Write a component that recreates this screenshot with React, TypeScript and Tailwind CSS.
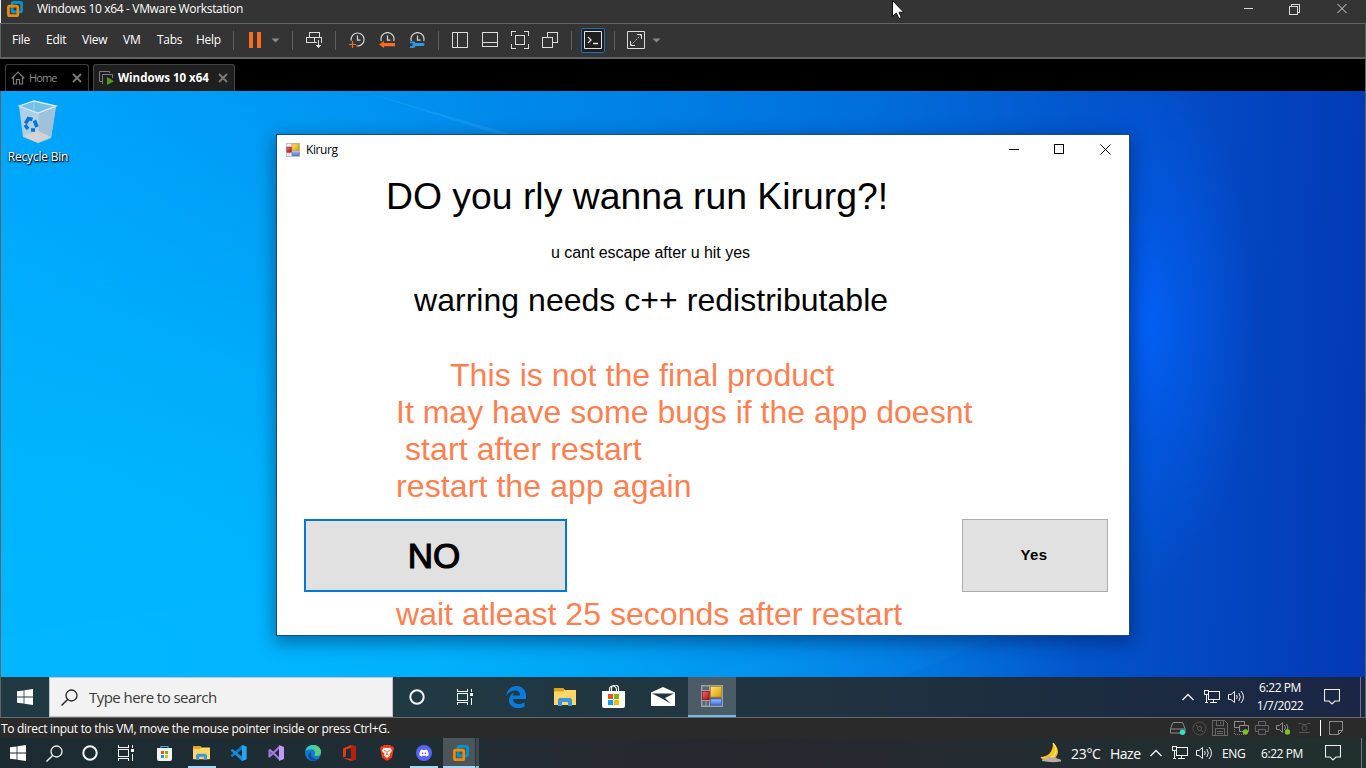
import React, { ReactNode } from 'react';
import { FaDiscord } from 'react-icons/fa';

type SvgProps = { w: number; h: number; children: ReactNode; crisp?: boolean; className?: string };

function Svg({ w, h, children, crisp, className = '' }: SvgProps) {
  return (
    <svg
      width={w}
      height={h}
      viewBox={`0 0 ${w} ${h}`}
      fill="none"
      shapeRendering={crisp ? 'crispEdges' : 'auto'}
      className={`block shrink-0 ${className}`}
    >
      {children}
    </svg>
  );
}

function VmwareLogo() {
  return (
    <Svg w={16} h={16}>
      <rect x="5.2" y="1.4" width="9.4" height="9.4" rx="1.2" stroke="#0095d3" strokeWidth="2.7" />
      <rect x="1.4" y="5.2" width="9.4" height="9.4" rx="1.2" stroke="#f38b00" strokeWidth="2.7" />
      <path d="M5.2 8.4V10.8H8" stroke="#0095d3" strokeWidth="2.7" />
    </Svg>
  );
}

function Caret() {
  return (
    <Svg w={9} h={5}>
      <path d="M0.5 0.5h8L4.5 4.5z" fill="#8a8a8a" />
    </Svg>
  );
}

function Sep({ className }: { className: string }) {
  return <div className={`h-[19px] w-px shrink-0 bg-[#5e5e5e] ${className}`} />;
}

function SnapClock({ full }: { full?: boolean }) {
  return (
    <>
      <path
        d={full ? 'M2.2 8.6A6.5 6.5 0 1 1 7.6 13.9' : 'M2.3 9A6.5 6.5 0 1 1 14.7 9'}
        stroke="#d6d6d6"
        strokeWidth="1.2"
      />
      <path d="M8.5 3.5V8.2H11.5" stroke="#d6d6d6" strokeWidth="1.2" />
    </>
  );
}

function TitleBar() {
  return (
    <div className="flex h-[23px] shrink-0 items-start border-l border-[#e8e8e8] bg-[#343434]">
      <div className="mt-px ml-[6px]">
        <VmwareLogo />
      </div>
      <span className="mt-0 ml-[14px] w-[1198px] text-[12px] leading-[18px] tracking-[-0.34px] whitespace-pre text-white">
        Windows 10 x64 - VMware Workstation
      </span>
      <div className="mt-[3px] flex items-start text-[#d8d8d8]">
        <Svg w={12} h={12} crisp className="ml-[9px]">
          <path d="M0 5.5h9" stroke="currentColor" />
        </Svg>
        <Svg w={12} h={12} crisp className="ml-[33px]">
          <path d="M0.5 3.5h8v8h-8zM2.5 3V1.5h8v8H9" stroke="currentColor" />
        </Svg>
        <Svg w={12} h={12} className="ml-[36px]">
          <path d="M0.5 1l9 9M9.500 1l-9 9" stroke="currentColor" />
        </Svg>
      </div>
    </div>
  );
}

function Toolbar() {
  return (
    <div className="flex h-[36px] shrink-0 items-center border-x border-t border-b-2 border-[#626262] bg-[#343434] pl-[11px] text-[12px] text-white [&>span]:mb-[2px] [&>span]:shrink-0 [&>span]:leading-[17px] [&>span]:tracking-[-0.25px]">
      <span className="w-[34px]">File</span>
      <span className="w-[36px]">Edit</span>
      <span className="w-[41px]">View</span>
      <span className="w-[34px]">VM</span>
      <span className="w-[39px]">Tabs</span>
      <span className="w-[37px]">Help</span>
      <Sep className="mr-[15px]" />
      <Svg w={12} h={16} crisp className="mb-px">
        <path d="M0 0h4v16H0zM8 0h4v16H8z" fill="#ff6a1f" />
      </Svg>
      <div className="mr-[11px] ml-[11px] -translate-x-px">
        <Caret />
      </div>
      <Sep className="mr-[13px]" />
      <Svg w={17} h={17} crisp>
        <path d="M3.500 0.500h10v5h-10zM0.500 5.500h15v5h-15zM8.500 5.500v5" stroke="#dcdcdc" />
        <path d="M9 9h8v8H9z" fill="#343434" />
        <path d="M12.500 8v8M10 13.500h5M11 14.500h3" stroke="#dcdcdc" />
        <path d="M9 10.500h2M15.500 6v5" stroke="#dcdcdc" />
      </Svg>
      <Sep className="mr-[13px] ml-[12px]" />
      <Svg w={17} h={17}>
        <SnapClock full />
        <path d="M3.500 9v7M0 12.500h7" stroke="#ff6a1f" strokeWidth="1.200" />
      </Svg>
      <Svg w={17} h={17} className="ml-[13px]">
        <SnapClock />
        <path d="M0 12.500L5 9v2h11v3.200H5V16z" fill="#ff6a1f" />
      </Svg>
      <Svg w={17} h={17} className="ml-[13px]">
        <SnapClock />
        <path
          d="M1 9.500h3c1.500 0 2 .7 2.500 1.500H14c2 0 2.300 3 0 3H6.500C6 15 5.500 16 4 16H1v-1.700h2.500v-3H1z"
          fill="#2f9be6"
        />
      </Svg>
      <Sep className="mr-[13px] ml-[12px]" />
      <Svg w={16} h={16} crisp className="mb-px">
        <path d="M0.500 0.500h15v15h-15zM5.500 0v16" stroke="#dcdcdc" />
      </Svg>
      <Svg w={16} h={16} crisp className="mb-px ml-[14px]">
        <path d="M0.500 0.500h15v14h-15zM0 10.500h16" stroke="#dcdcdc" />
      </Svg>
      <Svg w={18} h={18} crisp className="mb-px ml-[13px]">
        <path
          d="M0.500 5V0.500H5M13 0.500h4.500V5M17.500 13v4.500H13M5 17.500H0.500V13M4.500 4.500h9v9h-9z"
          stroke="#dcdcdc"
        />
      </Svg>
      <Svg w={17} h={16} crisp className="mb-px ml-[13px]">
        <path d="M0.500 5.500h10v10h-10zM5.500 5V0.500h10v10H11" stroke="#dcdcdc" />
      </Svg>
      <Sep className="mr-[9px] ml-[12px]" />
      <div className="mb-px flex h-[25px] w-[24px] shrink-0 items-center justify-center rounded-[2px] border border-[#2271b3] bg-[#1f1f1f]">
        <Svg w={18} h={18}>
          <path d="M0.500 0.500h17v17h-17z" stroke="#e4e4e4" />
          <path d="M4 6l3 3-3 3M9 12.500h5" stroke="#e4e4e4" strokeWidth="1.300" />
        </Svg>
      </div>
      <Sep className="mr-[12px] ml-[9px]" />
      <Svg w={18} h={18} className="mb-px">
        <path d="M0.500 0.500h17v17h-17z" stroke="#dcdcdc" />
        <path d="M10 3.500h4.500V8M8 14.500H3.500V10" stroke="#dcdcdc" />
        <path d="M4 14L14 4" stroke="#b8b8b8" strokeDasharray="2 1.200" />
      </Svg>
      <div className="ml-[7px]">
        <Caret />
      </div>
    </div>
  );
}

function TabX() {
  return (
    <Svg w={10} h={10}>
      <path d="M1 1l8 8M9 1l-8 8" stroke="#7c7c7c" strokeWidth="1.800" />
    </Svg>
  );
}

function TabStrip() {
  return (
    <div className="flex h-[32px] shrink-0 items-end border-r border-[#626262] bg-black">
      <div className="ml-[5px] flex h-[27px] w-[84px] items-center rounded-t-[3px] border border-b-0 border-[#3c3c3c] bg-black">
        <Svg w={14} h={14} className="ml-[5px]">
          <path d="M0.700 7.500L7 1l6.300 6.500M2.500 6v7h3V8.500h3V13h3V6" stroke="#7d7d7d" strokeWidth="1.200" />
        </Svg>
        <span className="ml-[4px] w-[43px] text-[11px] leading-[16px] tracking-[-0.85px] text-[#8c8c8c]">Home</span>
        <TabX />
      </div>
      <div className="ml-[4px] flex h-[27px] w-[142px] items-center rounded-t-[3px] border border-b-0 border-[#454545] bg-[#1f1f1f]">
        <Svg w={15} h={14} className="ml-[5px]">
          <path d="M10.500 2V0.500h-10v10H3M3.500 13V3.500h10V7" stroke="#7d7d7d" />
          <path d="M8 6l7 4.200L8 14z" fill="#4f9c1b" />
        </Svg>
        <span className="ml-[4px] w-[100px] text-[11.5px] leading-[16px] font-bold tracking-[-0.02px] whitespace-pre text-white">
          Windows 10 x64
        </span>
        <TabX />
      </div>
    </div>
  );
}

function RecycleBin() {
  return (
    <div className="flex w-[74px] flex-col items-center">
      <Svg w={40} h={44}>
        <path d="M1 6L20 13 38 6 33 38 20 43 5 37z" fill="#b9d3e4" opacity=".93" />
        <path d="M20 13L38 6 33 38 20 43z" fill="#9fc2da" />
        <path d="M1 6L16 1 38 6 20 13z" fill="#73bfe6" />
        <path d="M1 6L16 1 38 6 20 13z" stroke="#dcecf6" strokeWidth="1.300" />
        <path d="M5 36l15-5 13 6-13 6z" fill="#d9d3d2" opacity=".9" />
        <path d="M16 1v12M20 13v27" stroke="#cfe4f1" strokeWidth=".6" />
        <g stroke="#0a72d0" strokeWidth="3.600">
          <path d="M7.500 23.500l3-5 4 1" />
          <path d="M16.500 20.500l2.500 6.500" />
          <path d="M17 30h-4M10 29l-3-4" />
        </g>
      </Svg>
      <span className="mt-[4px] text-[12px] leading-[17px] tracking-[-0.22px] whitespace-pre text-white [text-shadow:0_1px_2px_#000,1px_1px_1px_#000]">
        Recycle Bin
      </span>
    </div>
  );
}

function FormsIcon({ size, dark }: { size: number; dark?: boolean }) {
  return (
    <svg width={size} height={size} viewBox="0 0 22 22" className="block shrink-0">
      <defs>
        <linearGradient id="fy" x1="0" y1="0" x2="1" y2="1">
          <stop offset="0" stopColor="#ffe680" />
          <stop offset="1" stopColor="#d99a00" />
        </linearGradient>
        <linearGradient id="fb" x1="0" y1="0" x2="0" y2="1">
          <stop offset="0" stopColor="#9cc0ff" />
          <stop offset="1" stopColor="#3a6fe0" />
        </linearGradient>
        <linearGradient id="fr" x1="0" y1="0" x2="1" y2="1">
          <stop offset="0" stopColor="#f07070" />
          <stop offset="1" stopColor="#a01010" />
        </linearGradient>
      </defs>
      <rect x=".7" y=".7" width="20.600" height="20.600" fill={dark ? '#5a6670' : '#f4f4f4'} stroke={dark ? '#9aa3aa' : '#b9b9b9'} strokeWidth="1.400" />
      <path d="M8.500 1v20M1 5.500h8M1 15.500h8M5 15v6" stroke={dark ? '#9aa3aa' : '#c8c8c8'} />
      <rect x="9.500" y="1.500" width="11" height="10.500" fill="url(#fy)" stroke="#c08a10" strokeWidth=".8" />
      <rect x="1.300" y="6.500" width="7" height="8" fill="url(#fr)" stroke="#a01818" strokeWidth=".8" />
      <rect x="9.500" y="14" width="11" height="6" fill="url(#fb)" stroke="#3c68c8" strokeWidth=".8" />
    </svg>
  );
}

function Dialog() {
  return (
    <div className="absolute top-[43px] left-[275px] flex h-[502px] w-[854px] flex-col border border-[#1d4d72] bg-white font-['Liberation_Sans',Arial,sans-serif] text-black shadow-[0_5px_16px_2px_rgba(0,20,60,0.42)]">
      <div className="flex h-[30px] shrink-0 items-center font-['Open_Sans','Noto_Sans',sans-serif]">
        <div className="mb-px ml-[9px]">
          <FormsIcon size={14} />
        </div>
        <span className="mb-px ml-[6px] flex-1 text-[12px] leading-[17px] tracking-[-0.4px]">Kirurg</span>
        <Svg w={11} h={11} crisp className="mr-[34px]">
          <path d="M0 4.500h10" stroke="#000" />
        </Svg>
        <Svg w={11} h={11} crisp className="mr-[35px] mb-px">
          <path d="M0.500 0.500h9v9h-9z" stroke="#000" />
        </Svg>
        <Svg w={11} h={11} className="mr-[18px] mb-[2px]">
          <path d="M0.500 0.500l10 10M10.500 0.500l-10 10" stroke="#000" />
        </Svg>
      </div>
      <h1 className="mt-[10px] ml-[109px] h-[43px] shrink-0 text-[37.33px] leading-[43px] tracking-[0px] whitespace-pre">
        DO you rly wanna run Kirurg?!
      </h1>
      <p className="mt-[26px] ml-[274px] h-[18px] shrink-0 text-[16px] leading-[18px] tracking-[-0.04px] whitespace-pre">
        u cant escape after u hit yes
      </p>
      <p className="mt-[20px] ml-[137px] h-[37px] shrink-0 text-[32px] leading-[37px] tracking-[0.03px] whitespace-pre">
        warring needs c++ redistributable
      </p>
      <div className="mt-[38px] ml-[119px] shrink-0 text-[32px] leading-[37px] whitespace-pre text-[#ff7f50]">
        <p className="pl-[54px] tracking-[0.06px]">This is not the final product</p>
        <p>It may have some bugs if the app doesnt</p>
        <p className="pl-[9px] tracking-[0.1px]">start after restart</p>
        <p className="tracking-[0.1px]">restart the app again</p>
      </div>
      <div className="mt-[14px] flex h-[73px] shrink-0 justify-between pr-[21px] pl-[27px]">
        <button className="w-[263px] border-2 border-[#0078d7] bg-[#e1e1e1] pr-[3px] text-[35px] leading-[40px] [-webkit-text-stroke:1.2px_#000]">
          NO
        </button>
        <button className="w-[146px] border border-[#adadad] bg-[#e1e1e1] pr-[2px] text-[15px] font-bold tracking-[0.4px]">Yes</button>
      </div>
      <p className="mt-[4px] ml-[119px] h-[37px] shrink-0 text-[32px] leading-[37px] tracking-[0.03px] whitespace-pre text-[#ff7f50]">
        wait atleast 25 seconds after restart
      </p>
    </div>
  );
}

function Desktop() {
  return (
    <div className="relative h-[586px] shrink-0 overflow-hidden border-x border-[#5f6468] bg-[radial-gradient(ellipse_110px_260px_at_1146px_232px,rgba(3,96,245,1)_0%,rgba(3,92,235,0.7)_35%,rgba(3,80,215,0)_100%),radial-gradient(ellipse_1000px_620px_at_80px_586px,#00b7ff_0%,rgba(0,183,255,0.85)_35%,rgba(0,150,240,0)_100%),linear-gradient(92deg,#00a3fc_0%,#0095f1_23%,#0082e6_45%,#006edb_63%,#035bd0_75%,#0350c8_82%,#0345c0_90%,#0339b4_100%)]">
      <svg width="1364" height="586" className="absolute inset-0 block">
        <path d="M360 0L520 46H505z" fill="#3fb4ff" opacity=".25" />
        <path d="M0 545L275 500V586H0z" fill="#19c0ff" opacity=".08" />
        <path d="M700 586L860 530 1000 545 900 586z" fill="#20a0ff" opacity=".08" />
      </svg>
      <div className="absolute top-[9px] left-0">
        <RecycleBin />
      </div>
      <Dialog />
    </div>
  );
}

function WinLogo() {
  return (
    <Svg w={16} h={16}>
      <path d="M0 2.300L6.600 1.400V7.600H0zM7.400 1.300L16 0V7.600H7.400zM0 8.400H6.600V14.600L0 13.700zM7.400 8.400H16V16L7.400 14.800z" fill="#fff" />
    </Svg>
  );
}

function Magnifier({ color }: { color: string }) {
  return (
    <Svg w={17} h={17}>
      <circle cx="10.500" cy="6.500" r="5.500" stroke={color} strokeWidth="1.300" />
      <path d="M6.600 10.400L0.500 16.500" stroke={color} strokeWidth="1.400" />
    </Svg>
  );
}

function Ring() {
  return (
    <Svg w={16} h={16}>
      <circle cx="8" cy="8" r="6.700" stroke="#f4f4f4" strokeWidth="2" />
    </Svg>
  );
}

function TaskView() {
  return (
    <Svg w={17} h={16} crisp>
      <path d="M0.500 4.500h10v7h-10zM0.500 0v2.500h10V0M0.500 16v-2.500h10V16M14.500 0v3M14.500 9v7" stroke="#f4f4f4" />
      <path d="M13 4h3v3h-3z" fill="#f4f4f4" />
    </Svg>
  );
}

function Explorer({ size }: { size: number }) {
  return (
    <svg width={size} height={(size * 18) / 22} viewBox="0 0 22 18" className="block">
      <path d="M0 0h9l2 2h11v15H0z" fill="#ffd767" />
      <path d="M0 0h9l1.500 1.500L9 3.500H0z" fill="#e0a11b" />
      <path d="M4 18v-6.500L5.500 10h11l1.500 1.500V18h-4v-4H8v4z" fill="#3c96dc" />
    </svg>
  );
}

function StoreSquares({ x, y, s, g }: { x: number; y: number; s: number; g: number }) {
  return (
    <>
      <rect x={x} y={y} width={s} height={s} fill="#f25022" />
      <rect x={x + s + g} y={y} width={s} height={s} fill="#7fba00" />
      <rect x={x} y={y + s + g} width={s} height={s} fill="#00a4ef" />
      <rect x={x + s + g} y={y + s + g} width={s} height={s} fill="#ffb900" />
    </>
  );
}

function Chevron() {
  return (
    <Svg w={12} h={8}>
      <path d="M0.500 7L6 1.500 11.500 7" stroke="#f0f0f0" strokeWidth="1.300" />
    </Svg>
  );
}

function Network() {
  return (
    <Svg w={16} h={14} crisp>
      <path d="M5 1.500h10.500v8H4.500V5M9.500 10v3M6 12.500h7M0.500 0.500h4v4h-4zM2.500 5v8M1 12.500h3" stroke="#f0f0f0" />
    </Svg>
  );
}

function Speaker() {
  return (
    <Svg w={17} h={14}>
      <path d="M0.500 4.500H3L6.500 1.500V12.500L3 9.500H0.500z" stroke="#f0f0f0" />
      <path d="M8.500 5q1.500 2 0 4M10.800 3q3 4 0 8M13 1q5 6 0 12" stroke="#f0f0f0" />
    </Svg>
  );
}

function Notification() {
  return (
    <Svg w={16} h={16}>
      <path d="M0.500 0.500h15v11.500H11L8 15 5 12H0.500z" stroke="#f0f0f0" strokeWidth="1.100" />
    </Svg>
  );
}

function Cell({ children, className }: { children: ReactNode; className: string }) {
  return <div className={`flex h-full shrink-0 items-center justify-center ${className}`}>{children}</div>;
}

function GuestTaskbar() {
  return (
    <div className="flex h-[40px] shrink-0 items-center border-x border-[#5f6468] bg-[linear-gradient(90deg,#203a44_0%,#203a44_30%,#20333f_60%,#1b2a41_85%,#1b2646_100%)] text-white">
      <Cell className="w-[48px]">
        <WinLogo />
      </Cell>
      <div className="flex h-full w-[344px] shrink-0 items-center border border-[#c4c4c4] bg-[#f2f2f2] pl-[11px]">
        <Magnifier color="#222" />
        <span className="ml-[11px] text-[15px] leading-[20px] tracking-[-0.55px] whitespace-pre text-[#3a3a3a]">
          Type here to search
        </span>
      </div>
      <Cell className="w-[48px]">
        <Ring />
      </Cell>
      <Cell className="w-[48px]">
        <TaskView />
      </Cell>
      <Cell className="ml-[2px] w-[49px]">
        <Svg w={20} h={22}>
          <path
            d="M0 10C1 3.500 5.500 0 10.500 0 16.500 0 20 4.500 20 9.500V13H7c0 3.500 3 5 6 5 2 0 4-.6 5.500-1.500V20.500C17 21.500 14.500 22 12 22 6.500 22 3 18.800 3 14.200 3 10.700 5 8 8 6.600 7.300 7.500 7 8.500 6.900 9.500H14C14 6.500 12.500 4.500 9 4.500 5.500 4.500 2 6.600 0 10z"
            fill="#0a7bdc"
          />
        </Svg>
      </Cell>
      <Cell className="w-[49px]">
        <Explorer size={22} />
      </Cell>
      <Cell className="w-[49px]">
        <Svg w={23} h={23} className="mb-px">
          <path d="M7.500 7V4.500a3.500 3.500 0 0 1 7 0V7M9.500 6V3.500a3.500 3.500 0 0 1 7 0V6" stroke="#fff" strokeWidth="1.100" />
          <path d="M0 6h23v15q0 2-2 2H2q-2 0-2-2z" fill="#fff" />
          <StoreSquares x={6} y={9} s={5} g={1} />
        </Svg>
      </Cell>
      <Cell className="w-[49px]">
        <Svg w={24} h={19} className="mb-px">
          <path d="M0 5.500L12 0l12 5.500V19H0z" fill="#fff" />
          <path d="M1 6.500h22L14 11l5.500 5.500L10 11z" fill="#20343f" />
        </Svg>
      </Cell>
      <div className="ml-px flex h-full w-[48px] shrink-0 items-center justify-center border-b-2 border-[#76b9ed] bg-[#4c5c67]">
        <FormsIcon size={22} dark />
      </div>
      <div className="flex h-full flex-1 items-center justify-end">
        <Chevron />
        <div className="ml-[10px]">
          <Network />
        </div>
        <div className="ml-[8px]">
          <Speaker />
        </div>
        <div className="ml-[8px] flex w-[54px] flex-col items-center text-[12px] leading-[18px] tracking-[-0.42px] whitespace-pre">
          <span>6:22 PM</span>
          <span>1/7/2022</span>
        </div>
        <div className="ml-[17px]">
          <Notification />
        </div>
        <div className="ml-[20px] mr-[4px] h-full w-px bg-[#6c7482]" />
      </div>
    </div>
  );
}

function StatusBar() {
  return (
    <div className="flex h-[21px] shrink-0 items-center border-t border-[#6a6a6a] bg-[#2a2a2a] text-white">
      <span className="ml-px flex-1 text-[12px] leading-[17px] tracking-[-0.31px] whitespace-pre">
        To direct input to this VM, move the mouse pointer inside or press Ctrl+G.
      </span>
      <Svg w={16} h={14}>
        <path d="M3 1.500h9.500L15 7.500v4.500H0.500V7.500zM0.500 8H15" stroke="#8c8c8c" />
        <circle cx="12.500" cy="11.200" r="2.700" fill="#2ee0cd" />
      </Svg>
      <Svg w={15} h={15} className="ml-[6px]">
        <circle cx="7.500" cy="7.500" r="6.500" stroke="#4c4c4c" />
        <circle cx="7.500" cy="7.500" r="2" stroke="#5c5c5c" />
        <path d="M4 4l1.500 1.500M9.500 9.500L11 11" stroke="#5c5c5c" />
      </Svg>
      <Svg w={16} h={16} className="ml-[5px]" crisp>
        <path d="M0.500 0.500h12l3 3v12h-15zM4.500 0.500v5h7v-5M8.500 2v2M3.500 15V8.500h9V15M5 11.500h6M5 13.500h6" stroke="#666" />
      </Svg>
      <Svg w={16} h={14} className="ml-[6px]">
        <path d="M6 6.500H0.500v-6h10V4M5.500 4.500h9v6h-9z" stroke="#8c8c8c" />
        <path d="M0.500 8v5.500H10" stroke="#777" strokeDasharray="1 1" />
        <circle cx="11.500" cy="11" r="2.700" fill="#7ec21c" />
      </Svg>
      <Svg w={14} h={14} className="ml-[5px]">
        <path d="M3.500 4.500v-4h7v4M3 10.500H0.500v-6h13v6H11M3.500 8.500h7v5h-7z" stroke="#666" />
      </Svg>
      <Svg w={14} h={14} className="ml-[7px]">
        <path d="M0.500 4.500h3l3-3v10l-3-3h-3zM8.500 4q2 3 0 5M10.500 3q2 3 1 6" stroke="#8c8c8c" />
        <circle cx="11.500" cy="11" r="2.700" fill="#7ec21c" />
      </Svg>
      <Svg w={13} h={12} className="ml-[8px]">
        <path d="M0.500 1.500h3l1 1h4l1-1h3M1 10.500h11" stroke="#565656" />
        <circle cx="6.500" cy="6" r="2.500" stroke="#565656" />
      </Svg>
      <div className="ml-[9px] h-[16px] w-px bg-white" />
      <Svg w={14} h={14} className="mr-[23px] ml-[8px]" crisp>
        <path d="M0.500 0.500h13v9l-4 4h-9zM9.500 13V9.500H13" stroke="#8c8c8c" />
      </Svg>
    </div>
  );
}

function HostTaskbar() {
  return (
    <div className="flex h-[30px] shrink-0 items-center bg-[linear-gradient(90deg,#1b2b31_0%,#1e2e34_30%,#262a31_42%,#28282f_55%,#232c31_75%,#21302f_100%)] text-white">
      <Cell className="w-[36px]">
        <WinLogo />
      </Cell>
      <Cell className="w-[36px]">
        <Magnifier color="#f4f4f4" />
      </Cell>
      <Cell className="w-[36px]">
        <Ring />
      </Cell>
      <Cell className="w-[36px]">
        <TaskView />
      </Cell>
      <Cell className="ml-[2px] w-[37px]">
        <Svg w={15} h={16}>
          <path d="M4 4V1.500h7V4" stroke="#29b6ea" strokeWidth="1.200" />
          <path d="M0 3h15v11q0 2-2 2H2q-2 0-2-2z" fill="#f4f4f4" />
          <StoreSquares x={4} y={6} s={3} g={1} />
        </Svg>
      </Cell>
      <Cell className="w-[37px]">
        <div className="flex h-full w-[28px] items-center justify-center border-b-2 border-[#a6d8f5] pt-[2px]">
          <Explorer size={17} />
        </div>
      </Cell>
      <Cell className="w-[37px]">
        <Svg w={16} h={16}>
          <path d="M11 0l4.500 1.800v12.400L11 16 4.500 9.800 1.500 12 0 11.200V10l8-7z" fill="#0e7ac4" />
          <path d="M11 0l4.500 1.800v12.400L11 16z" fill="#2ba4ee" />
          <path d="M0 5l1.500-1 10 7.800V16L0 6z" fill="#1b8ddb" />
          <path d="M11 4.500v7L6.500 8z" fill="#1b2c32" />
        </Svg>
      </Cell>
      <Cell className="w-[37px]">
        <Svg w={16} h={16}>
          <path d="M1.500 4.500v7l10-9.500M1.500 4.500l10 9.500" stroke="#a277dd" strokeWidth="2.200" strokeLinejoin="round" />
          <path d="M11 0l5 2v12l-5 2z" fill="#c09af2" />
        </Svg>
      </Cell>
      <Cell className="w-[37px]">
        <Svg w={16} h={16}>
          <circle cx="8" cy="8" r="8" fill="#1479cf" />
          <path d="M.3 6C1.500 2 4.500 0 8 0c4.500 0 8 3.300 8 7 0 2.700-2 4-4 4-1.500 0-2.500-.6-2.500-1.300 0-.6.800-.9.800-2C10.300 6 8.500 4.300 6 4.300 3.500 4.300 1.500 5 .3 6z" fill="#40c7c3" />
          <path d="M9 0c4 .4 7 3.300 7 7 0 2.700-2 4-4 4-1.500 0-2.500-.6-2.500-1.300 0-.6.800-.9.800-2 0-1-.5-2-1.300-2.600z" fill="#5bd36a" opacity=".75" />
          <path d="M6 7c-1 4 2 7.500 6.500 7.300C9 17 3.500 15.500 3 11c0-2 1.500-3.500 3-4z" fill="#0c4f9e" />
        </Svg>
      </Cell>
      <Cell className="w-[37px]">
        <Svg w={13} h={16}>
          <path d="M0 3.500L8 0l5 1.500v13L8 16 0 13l8 .8V3L3 4.500v7L0 12.500z" fill="#e03a12" />
          <path d="M8 0l5 1.500v13L8 16z" fill="#b8200c" />
        </Svg>
      </Cell>
      <Cell className="w-[37px]">
        <Svg w={14} h={16}>
          <path d="M4 0h6l1.500 1.500L13 1.300l1 2.200-.5 1.500L12 12.500 7 16l-5-3.500L.5 5 0 3.500l1-2.200 1.500.2z" fill="#fb3a12" />
          <path d="M7 3l3.500-.3 1.500 3L9.500 9l.5 1.500L7 13l-3-2.500L4.500 9 2 5.700l1.500-3z" fill="#fff" />
          <path d="M4 5.500l2 .8M10 5.500l-2 .8M7 6v3M5.500 10l1.500-.8 1.500.8" stroke="#fb3a12" strokeWidth=".9" />
        </Svg>
      </Cell>
      <Cell className="w-[37px]">
        <div className="flex h-full w-[28px] items-center justify-center border-b-2 border-[#a6d8f5] pt-[2px]">
          <div className="flex h-[16px] w-[16px] items-center justify-center rounded-full bg-[#5865f2]">
            <FaDiscord size={10} color="#fff" />
          </div>
        </div>
      </Cell>
      <div className="ml-px flex h-full w-[32px] shrink-0 items-center justify-center border-b-2 border-[#a6d8f5] bg-[#4b555a] pt-[2px] pl-[4px]">
        <VmwareLogo />
      </div>
      <div className="h-full w-[4px] shrink-0 border-b-2 border-l border-b-[#8fbdd6] border-l-[#2a3338] bg-[#40494e]" />
      <div className="flex h-full flex-1 items-center justify-end whitespace-pre">
        <Svg w={24} h={20}>
          <path d="M14 0C21 5 21 15 11 17.500 6 18.300 2.500 16.500 1.500 14 9 14 14 9 14 0z" fill="#fcc41c" />
          <path d="M14 0C19 6 17 13 11 15" stroke="#ffe36a" strokeWidth="1.500" />
          <path d="M3 18q0-3 4-2.500Q9 12 13 14.500q4-1.500 5 1 5 .5 4 3Q13 20 3 18z" fill="#b7aea4" />
        </Svg>
        <span className="mt-[2px] ml-[8px] w-[39px] text-[14px] leading-[20px] tracking-[-0.3px]">23°C</span>
        <span className="mt-[2px] w-[40px] text-[14px] leading-[20px] tracking-[-0.5px]">Haze</span>
        <Chevron />
        <div className="ml-[10px]">
          <Network />
        </div>
        <div className="ml-[8px]">
          <Speaker />
        </div>
        <span className="ml-[9px] w-[39px] text-[12px] leading-[17px] tracking-[-0.4px]">ENG</span>
        <span className="w-[64px] text-[12px] leading-[17px] tracking-[-0.42px]">6:22 PM</span>
        <Notification />
        <div className="mr-[4px] ml-[20px] h-full w-px bg-[#6f7a7a]" />
      </div>
    </div>
  );
}

export default function App() {
  return (
    <div className="relative flex h-[768px] w-[1366px] flex-col overflow-hidden bg-black font-['Open_Sans','Noto_Sans',sans-serif]">
      <TitleBar />
      <Toolbar />
      <TabStrip />
      <Desktop />
      <GuestTaskbar />
      <StatusBar />
      <HostTaskbar />
      <svg width="14" height="20" viewBox="0 0 14 20" className="absolute top-0 left-[892px] block">
        <path d="M0.500 0.500V16.500L4.300 13 7 18.500 9.300 17.500 7 12.300H11.700z" fill="#fff" stroke="#111" />
      </svg>
    </div>
  );
}
